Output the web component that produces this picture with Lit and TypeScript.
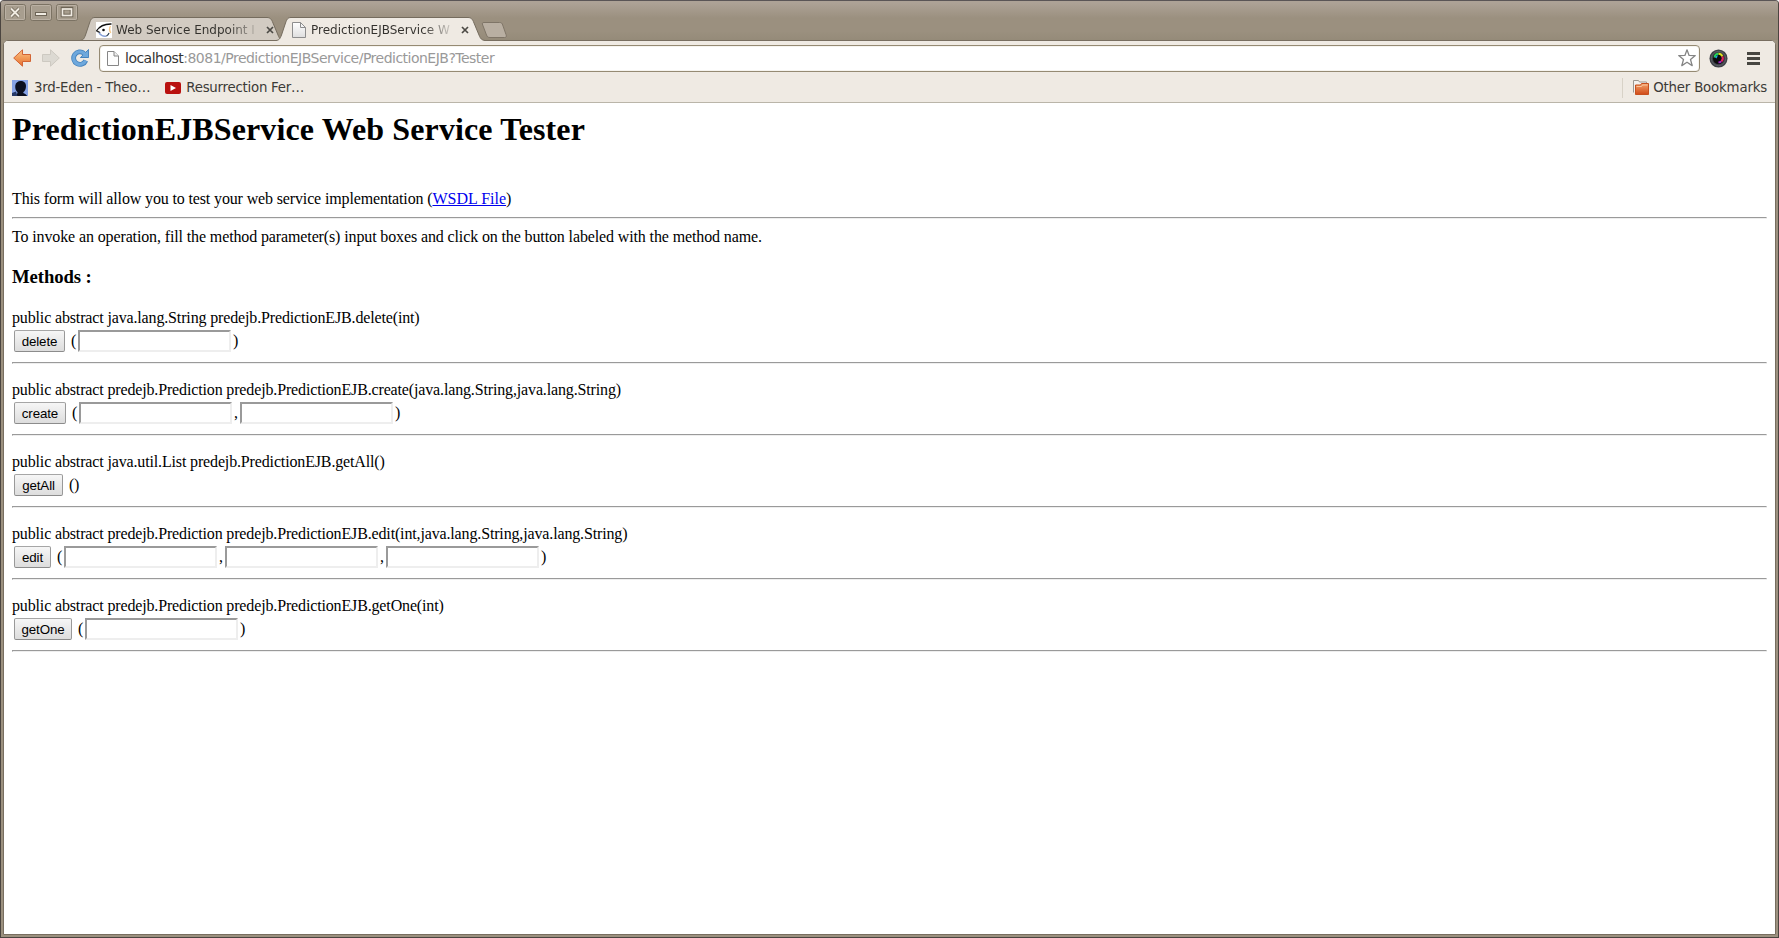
import { LitElement, html, css, svg } from "lit";
import { customElement, property } from "lit/decorators.js";

interface Method {
  signature: string;
  name: string;
  params: number;
  buttonWidth: number;
}

const METHODS: Method[] = [
  { signature: "public abstract java.lang.String predejb.PredictionEJB.delete(int)", name: "delete", params: 1, buttonWidth: 51 },
  { signature: "public abstract predejb.Prediction predejb.PredictionEJB.create(java.lang.String,java.lang.String)", name: "create", params: 2, buttonWidth: 52 },
  { signature: "public abstract java.util.List predejb.PredictionEJB.getAll()", name: "getAll", params: 0, buttonWidth: 49 },
  { signature: "public abstract predejb.Prediction predejb.PredictionEJB.edit(int,java.lang.String,java.lang.String)", name: "edit", params: 3, buttonWidth: 37 },
  { signature: "public abstract predejb.Prediction predejb.PredictionEJB.getOne(int)", name: "getOne", params: 1, buttonWidth: 58 },
];

@customElement("service-method")
class ServiceMethod extends LitElement {
  @property({ attribute: false }) method!: Method;

  static styles = css`
    :host { display: block; height: 72px; }
    .signature { height: 20px; line-height: 20px; white-space: nowrap; letter-spacing: -0.147px; }
    .call { display: flex; align-items: center; height: 26px; padding-left: 2px; }
    .invoke {
      box-sizing: border-box; height: 22px; margin: 0 6px 0 0; padding: 1px 0 0; text-align: center; white-space: nowrap;
      font: 13.333px/18px "Liberation Sans", Arial, sans-serif; letter-spacing: -0.120px; color: #000;
      border: 1px solid #a0a0a0; border-color: #a6a6a6 #999 #8c8c8c #999; border-radius: 2px;
      background: linear-gradient(#f6f6f6, #dddddd);
    }
    .param {
      box-sizing: border-box; width: 153px; height: 22px; margin: 0 2px; padding: 1px;
      border: 2px solid; border-color: #9a9a9a #eee #eee #9a9a9a; border-radius: 0; background: #fff; outline: none;
    }
    .open { width: 5px; }
    .rule { box-sizing: border-box; height: 2px; margin: 8px 0 16px; border: 1px solid; border-color: #9a9a9a #eee #eee #9a9a9a; }
  `;

  render() {
    const { signature, name, params, buttonWidth } = this.method;
    return html`
      <div class="signature">${signature}</div>
      <div class="call">
        <button class="invoke" style="width:${buttonWidth}px">${name}</button><span class="open">(</span>${Array.from({ length: params }, (_, i) =>
          html`${i ? html`<span>,</span>` : null}<input class="param" type="text" />`)}<span>)</span>
      </div>
      <div class="rule"></div>
    `;
  }
}

const pageIcon = html`
  <svg width="14" height="16" viewBox="0 0 14 16">
    <defs><linearGradient id="paper" x1="0" y1="0" x2="0" y2="1"><stop offset="0" stop-color="#fff" /><stop offset="1" stop-color="#dedede" /></linearGradient></defs>
    <path d="M.5.5h8l5 5v10H.5z" fill="url(#paper)" stroke="#8d8d8d" />
    <path d="M8.500.5v5h5z" fill="#f4f4f4" stroke="#8d8d8d" />
  </svg>`;

const narrowPageIcon = html`
  <svg width="12" height="15" viewBox="0 0 12 15">
    <path d="M.5.5h6.500l4.500 4.500v9.500H.5z" fill="#fdfdfd" stroke="#868686" />
    <path d="M7 .5V5h4.500" fill="#eee" stroke="#868686" />
  </svg>`;

const fishIcon = html`
  <svg width="16" height="16" viewBox="0 0 16 16">
    <rect width="16" height="16" fill="#fff" />
    <path d="M.5 9C3.500 4 8.500 1.800 15.500 2" fill="none" stroke="#111" stroke-width="1.300" />
    <path d="M.5 9c1.800.5 3 1 3.500 2" fill="none" stroke="#333" stroke-width="1.300" />
    <path d="M3 11c2 2.500 5 3.600 7.500 3" fill="none" stroke="#8aa3d8" stroke-width="1.400" />
    <path d="M10.500 14c1.500-1 2.200-2 2.500-3" fill="none" stroke="#345" stroke-width="1.200" />
    <path d="M14.500 4c-1.500 2.500-1.500 4 .2 7" fill="none" stroke="#f6c88a" stroke-width="1.400" />
    <circle cx="7.500" cy="8" r="1.300" fill="#111" />
  </svg>`;

const tabShape = (w: number, fill: string) => html`
  <svg class="shape" width=${w} height="24" viewBox="0 0 ${w} 24">
    <path d="M0 23.500C3 23.200 4 22 5.500 18L9.500 6C11 2 12 .5 15 .5H${w - 17}C${w - 14} .5 ${w - 12.5} 2 ${w - 11} 6L${w - 6} 18C${w - 4.5} 22 ${w - 3} 23.200 ${w} 23.500V24H0z" fill=${fill} />
    <path d="M0 23.500C3 23.200 4 22 5.500 18L9.500 6C11 2 12 .5 15 .5H${w - 17}C${w - 14} .5 ${w - 12.5} 2 ${w - 11} 6L${w - 6} 18C${w - 4.5} 22 ${w - 3} 23.200 ${w} 23.500" fill="none" stroke="#756c5e" />
  </svg>`;

const closeIcon = html`
  <svg class="close" width="8" height="8" viewBox="0 0 8 8"><path d="M1 1l6 6M7 1L1 7" stroke="#4c4a45" stroke-width="1.700" /></svg>`;

const windowGlyphs = [
  svg`<path d="M7 4.500l8 8M15 4.500l-8 8" stroke="#6d6456" stroke-width="3.400" /><path d="M7 4.500l8 8M15 4.500l-8 8" stroke="#f0ebe2" stroke-width="1.900" />`,
  svg`<rect x="5.500" y="8.500" width="11" height="3" fill="#f0ebe2" stroke="#6d6456" />`,
  svg`<rect x="6.500" y="4.500" width="9" height="7" fill="none" stroke="#6d6456" stroke-width="3.600" /><rect x="6.500" y="5" width="9" height="6.500" fill="none" stroke="#f0ebe2" stroke-width="1.700" />`,
];

@customElement("app-root")
class AppRoot extends LitElement {
  static styles = css`
    :host { display: block; }
    svg { display: block; flex: none; }
    .window {
      box-sizing: border-box; width: 1779px; height: 938px; overflow: hidden;
      display: flex; flex-direction: column; background: #9c917f;
      border: 1px solid #4b4540; border-top-color: #5a5556; border-radius: 4px 4px 0 0;
      box-shadow: inset 0 1px #b9afa1;
    }
    .titlebar {
      display: flex; height: 39px; padding-left: 4px; flex: none;
      background: linear-gradient(#ada296 2px, #9b907f 17px, #9b907f 30px, #958b79);
      font-family: "DejaVu Sans", sans-serif;
    }
    .controls { display: flex; gap: 4px; padding-top: 3px; margin-left: -1px; }
    .control { fill: none; }
    .tabs { display: flex; padding: 16px 0 0 2px; }
    .tab { display: grid; height: 24px; }
    .tab + .tab { margin-left: -8px; z-index: 1; }
    .shape, .face { grid-area: 1 / 1; }
    .shape { overflow: visible; }
    .face { display: flex; align-items: center; height: 25px; z-index: 1; }
    .tab-title { width: 142px; margin-left: 4px; white-space: nowrap; font-size: 12px; line-height: 16px; color: transparent; background: linear-gradient(90deg, #33312d 112px, rgba(51, 49, 45, 0) 145px); background-clip: text; -webkit-background-clip: text; }
    .first .face { padding-left: 16px; }
    .second .face { padding-left: 16px; }
    .second .tab-title { margin-left: 5px; }
    .close { margin-left: 8px; }
    .new-tab { margin: 5px 0 0 -4px; z-index: 2; }
    .frame {
      box-sizing: border-box; flex: 1; min-height: 0; margin: 0 2px 2px 2px; display: flex; flex-direction: column;
      border: 1px solid #786e60; border-radius: 5px 5px 0 0; overflow: hidden; background: #fff;
    }
    .second { position: relative; }
    .chrome { background: #efeae3; font-family: "DejaVu Sans", sans-serif; color: #3c3b37; }
    .toolbar { display: flex; align-items: center; height: 34px; padding: 0 15px 1px 9px; }
    .nav { display: flex; align-items: center; gap: 11px; }
    .omnibox {
      box-sizing: border-box; display: flex; align-items: center; flex: 1; height: 27px; margin: 0 9px 0 10px; padding: 0 3px 0 7px;
      border: 1px solid #958a73; border-radius: 4px; background: #fff; font-size: 14px; color: #999;
      box-shadow: inset 0 0 0 1px #f6f4ef;
    }
    .url { flex: 1; margin-left: 6px; white-space: nowrap; letter-spacing: -0.510px; }
    .host { color: #333; }
    .menu { margin-left: 19px; }
    .bookmarks {
      box-sizing: border-box; display: flex; align-items: center; height: 27px; padding: 0 8px 3px 8px; font-size: 13.333px;
      letter-spacing: -0.240px; border-bottom: 1px solid #bab5a9; white-space: nowrap;
    }
    .bookmark { display: flex; align-items: center; gap: 6px; margin-right: 15px; }
    .bookmark + .bookmark { gap: 5px; }
    .other { display: flex; align-items: center; gap: 4px; height: 20px; margin-left: auto; padding-left: 10px; border-left: 1px solid #d8d2c7; letter-spacing: -0.180px; }
    .page { padding: 0 8px; font: 16px "Liberation Serif", "Times New Roman", serif; color: #000; }
    .title { margin: 8px 0 0; font-size: 32px; line-height: 37px; font-weight: bold; letter-spacing: 0.115px; }
    .intro { margin-top: 41px; height: 20px; line-height: 20px; letter-spacing: -0.140px; }
    .link { color: #0000ee; text-decoration: underline; letter-spacing: 0; }
    .rule { box-sizing: border-box; height: 2px; margin: 8px 0; border: 1px solid; border-color: #9a9a9a #eee #eee #9a9a9a; }
    .hint { height: 20px; line-height: 20px; letter-spacing: -0.124px; }
    .heading { margin: 19px 0 20px; font-size: 18.720px; line-height: 22px; font-weight: bold; letter-spacing: -0.100px; }
  `;

  render() {
    return html`
      <div class="window">
        <div class="titlebar">
          <div class="controls">
            ${windowGlyphs.map((g) => html`
              <svg class="control" width="22" height="17" viewBox="0 0 22 17">
                <rect x=".5" y=".5" width="21" height="16" rx="2" fill="#a89e8f" stroke="#7b7263" />
                <rect x="1.500" y="1.500" width="19" height="14" rx="1" fill="none" stroke="#bbb1a4" />
                ${g}
              </svg>`)}
          </div>
          <div class="tabs">
            <div class="tab first">
              ${tabShape(204, "#d2cbc2")}
              <div class="face">${fishIcon}<span class="tab-title">Web Service Endpoint I</span>${closeIcon}</div>
            </div>
            <div class="tab second">
              ${tabShape(209, "#efeae3")}
              <div class="face">${pageIcon}<span class="tab-title">PredictionEJBService W</span>${closeIcon}</div>
            </div>
            <svg class="new-tab" width="27" height="16" viewBox="0 0 27 16">
              <path d="M3 .5h15.500c2 0 2.500.7 3.200 2.500l3.300 9.500c.7 2 .3 3-1.500 3H9c-2 0-2.700-.7-3.500-2.500L1.700 3C1 1.200 1.300.5 3 .5z" fill="#b9afa2" stroke="#7f7567" />
            </svg>
          </div>
        </div>
        <div class="frame">
          <div class="chrome">
            <div class="toolbar">
              <div class="nav">
                <svg width="18" height="18" viewBox="0 0 18 18">
                  <defs><linearGradient id="back" x1="0" y1="0" x2="0" y2="1"><stop offset="0" stop-color="#fbc48c" /><stop offset=".5" stop-color="#f29a57" /><stop offset="1" stop-color="#e56d33" /></linearGradient></defs>
                  <path d="M.7 9L9.500.8v4.700h8v7h-8v4.700z" fill="url(#back)" stroke="#d26434" />
                </svg>
                <svg width="18" height="18" viewBox="0 0 18 18">
                  <path d="M17.300 9L8.500.8v4.700h-8v7h8v4.700z" fill="#dcd9d2" stroke="#cdc9c1" />
                </svg>
                <svg width="18" height="18" viewBox="0 0 18 18">
                  <path d="M14.800 11.500A6.300 6.300 0 1 1 13 4.300" fill="none" stroke="#4583bd" stroke-width="4.800" />
                  <path d="M17.600.5v8H9.400z" fill="#6ea8dc" stroke="#4583bd" />
                  <path d="M14.600 11.600A6.300 6.300 0 1 1 13 4.300l1.500 1.500" fill="none" stroke="#6ea8dc" stroke-width="3.200" />
                </svg>
              </div>
              <div class="omnibox">
                ${narrowPageIcon}
                <span class="url"><span class="host">localhost</span>:8081/PredictionEJBService/PredictionEJB?Tester</span>
                <svg width="18" height="18" viewBox="0 0 18 18">
                  <path d="M9 .8l2.100 5.600 6.200.2-4.800 3.900 1.700 6.100L9 13.200l-5.200 3.400 1.700-6.100L.7 6.600l6.200-.2z" fill="#fff" stroke="#858585" stroke-width="1.300" stroke-linejoin="round" />
                </svg>
              </div>
              <svg width="19" height="19" viewBox="0 0 20 20">
                <circle cx="10" cy="10" r="9.500" fill="#3e4147" />
                <circle cx="10" cy="10" r="7.500" fill="none" stroke="#5e626a" />
                <circle cx="10" cy="10" r="5.800" fill="#0b0b0d" />
                <path d="M6 9a4 4 0 0 1 4-4" fill="none" stroke="#25d45a" stroke-width="2.200" />
                <path d="M10 5a4 4 0 0 1 4 3" fill="none" stroke="#d9e021" stroke-width="2.200" />
                <path d="M14 8a4 4 0 0 1-1 5" fill="none" stroke="#e0255e" stroke-width="2.200" />
                <path d="M13 13a4 4 0 0 1-3 1" fill="none" stroke="#a427c9" stroke-width="2" />
                <path d="M6.500 9c0-1.500 1.500-2.500 3-2.500L8 10z" fill="#15a8e0" />
              </svg>
              <svg class="menu" width="13" height="13" viewBox="0 0 13 13">
                <path d="M0 1.500h13M0 6.500h13M0 11.500h13" stroke="#474641" stroke-width="2.800" />
              </svg>
            </div>
            <div class="bookmarks">
              <div class="bookmark">
                <svg width="16" height="16" viewBox="0 0 16 16">
                  <rect width="16" height="16" fill="#86a3e6" />
                  <path d="M4.500 16c0-2 1-2.300 1-3.700C3.500 10.500 3 8 3.300 5.500 3.700 2.500 6 1 8.700 1c3 0 5.300 1.800 5.300 5 0 2.800-1 5-2.800 6.300 0 1.500 3.300 1.500 3.800 3.700z" fill="#0b1020" />
                  <path d="M0 13l4-1.500 1.500 4.500H0z" fill="#263968" />
                </svg>
                <span>3rd-Eden - Theo…</span>
              </div>
              <div class="bookmark">
                <svg width="16" height="12" viewBox="0 0 16 12">
                  <rect width="16" height="12" rx="2" fill="#b9110f" /><path d="M5.500 3v6l5.500-3z" fill="#fff" />
                </svg>
                <span>Resurrection Fer…</span>
              </div>
              <div class="other">
                <svg width="16" height="15" viewBox="0 0 16 15">
                  <defs><linearGradient id="folder" x1="0" y1="0" x2="0" y2="1"><stop offset="0" stop-color="#f3a26b" /><stop offset="1" stop-color="#d04a17" /></linearGradient></defs>
                  <path d="M.5 12.500V.5h5l1 1.500h7v2" fill="#f3f1ee" stroke="#9b9791" />
                  <path d="M2.500 14.500v-9.500h5l1-1.500h7v11z" fill="url(#folder)" stroke="#c7501f" />
                  <path d="M3.500 6.500h5l1-1.500h5" fill="none" stroke="#f9c49c" />
                </svg>
                <span>Other Bookmarks</span>
              </div>
            </div>
          </div>
          <div class="page">
            <h1 class="title">PredictionEJBService Web Service Tester</h1>
            <div class="intro">This form will allow you to test your web service implementation (<a class="link">WSDL File</a>)</div>
            <div class="rule"></div>
            <div class="hint">To invoke an operation, fill the method parameter(s) input boxes and click on the button labeled with the method name.</div>
            <h3 class="heading">Methods :</h3>
            ${METHODS.map((m) => html`<service-method .method=${m}></service-method>`)}
          </div>
        </div>
      </div>
    `;
  }
}
